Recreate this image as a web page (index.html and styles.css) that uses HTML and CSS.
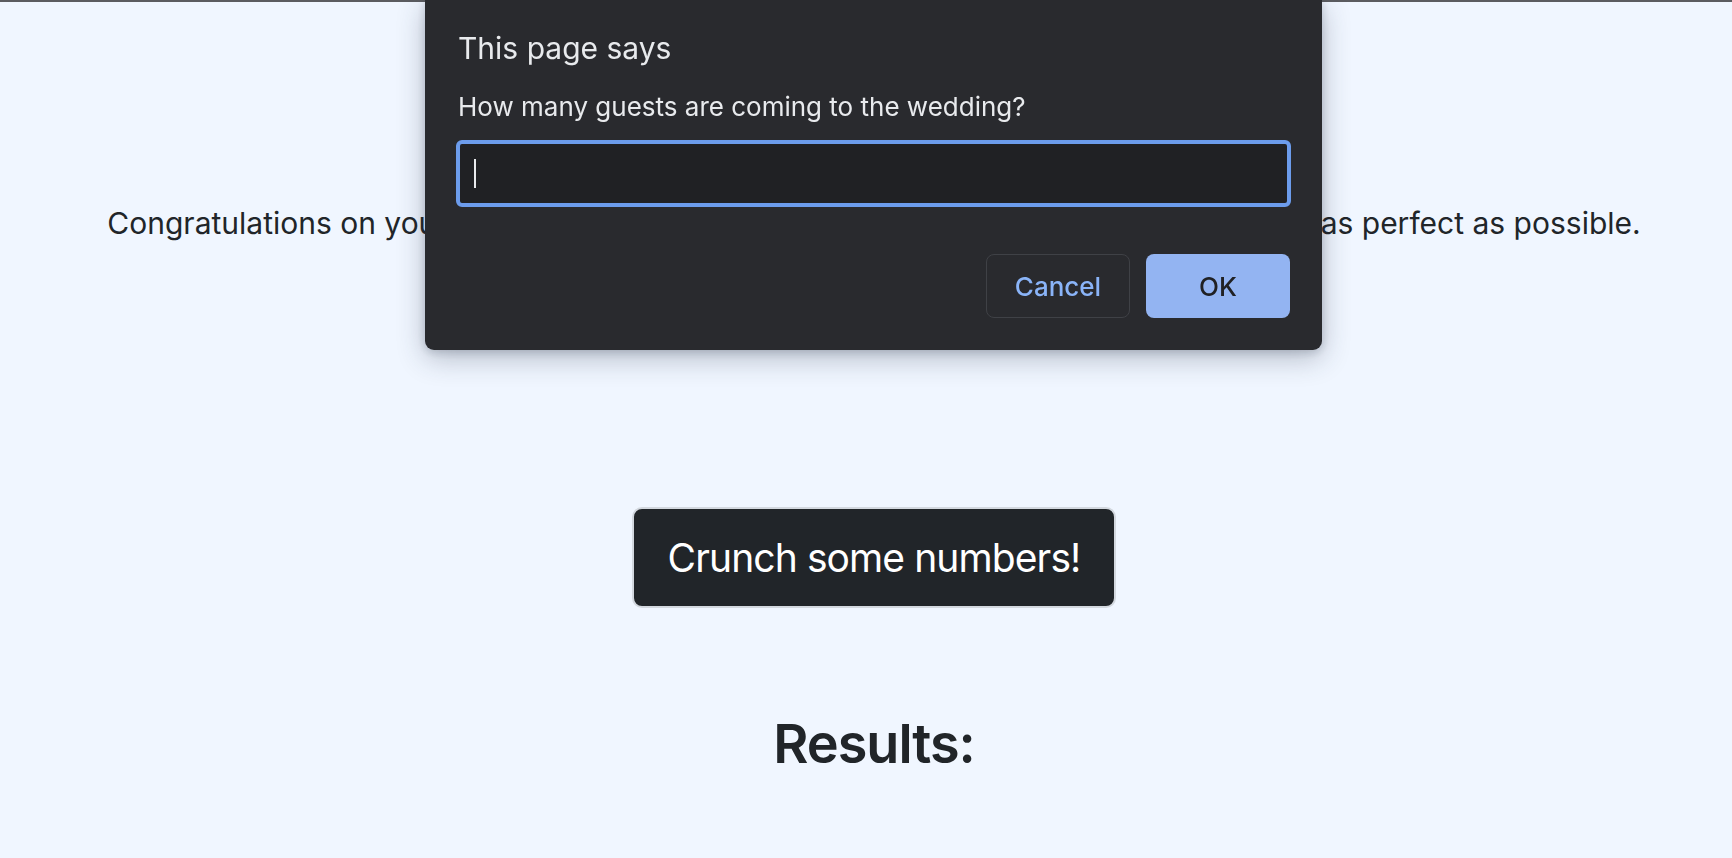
FILE: index.html
```html
<!DOCTYPE html>
<html lang="en">
<head>
<meta charset="utf-8">
<title>Wedding Calculator</title>
<link rel="stylesheet" href="styles.css">
</head>
<body>
<main class="page">
  <p class="intro">Congratulations on your upcoming wedding! We'll crunch the numbers so your day is as perfect as possible.</p>
  <div class="actions">
    <button class="crunch" type="button">Crunch some numbers!</button>
  </div>
  <h2 class="results">Results:</h2>
</main>

<div class="dialog" role="dialog">
  <div class="dialog-title">This page says</div>
  <div class="dialog-msg">How many guests are coming to the wedding?</div>
  <div class="dialog-input"><span class="caret"></span></div>
  <div class="dialog-buttons">
    <button class="btn-cancel" type="button">Cancel</button>
    <button class="btn-ok" type="button">OK</button>
  </div>
</div>
</body>
</html>
```

FILE: styles.css
```css
html, body {
  margin: 0;
  padding: 0;
}
body {
  background: #f0f6ff;
  border-top: 2px solid #5b5c60;
  color: #212529;
  font-family: Inter, "Noto Sans", sans-serif;
  height: 856px;
  overflow: hidden;
}
.page {
  padding-left: 16px;
  display: flex;
  flex-direction: column;
  align-items: center;
}
.intro {
  margin: 199px 0 0;
  font-size: 30px;
  line-height: 45px;
  text-align: center;
  white-space: nowrap;
}
.actions {
  margin-top: 261px;
}
.crunch {
  font-family: Inter, "Noto Sans", sans-serif;
  font-size: 39px;
  letter-spacing: -0.9px;
  color: #fff;
  background: #212529;
  border: 2px solid #d3d8df;
  border-radius: 10px;
  width: 484px;
  height: 101px;
  padding: 0;
}
.results {
  margin: 104px 0 0;
  font-size: 54px;
  font-weight: 600;
  letter-spacing: -1px;
  line-height: 1.2;
}

.dialog {
  position: fixed;
  top: 0;
  left: 425px;
  width: 897px;
  height: 350px;
  box-sizing: border-box;
  background: #292a2e;
  border-radius: 0 0 9px 9px;
  box-shadow: 0 8px 28px rgba(40, 50, 70, 0.3), 0 2px 8px rgba(40, 50, 70, 0.2);
  padding: 28px 31px 32px 31px;
  display: flex;
  flex-direction: column;
  font-family: Inter, "Noto Sans", sans-serif;
  color: #e8eaed;
}
.dialog-title {
  font-size: 30px;
  line-height: 40px;
  padding-left: 2px;
}
.dialog-msg {
  margin-top: 22px;
  font-size: 26px;
  line-height: 34px;
  padding-left: 2px;
}
.dialog-input {
  margin-top: 16px;
  height: 67px;
  box-sizing: border-box;
  border: 4px solid #6c9cec;
  border-radius: 6px;
  background: #202124;
  display: flex;
  align-items: center;
  padding-left: 14px;
}
.caret {
  width: 2px;
  height: 29px;
  background: #e8eaed;
}
.dialog-buttons {
  margin-top: auto;
  display: flex;
  justify-content: flex-end;
  gap: 16px;
  padding-right: 1px;
}
.dialog-buttons button {
  width: 144px;
  height: 64px;
  border-radius: 8px;
  font-family: Inter, "Noto Sans", sans-serif;
  font-size: 26px;
  font-weight: 500;
  padding: 0;
}
.btn-cancel {
  background: #292a2e;
  border: 1px solid #3f4146;
  color: #8ab4f8;
}
.btn-ok {
  background: #93b4f2;
  border: none;
  color: #202124;
}
```
